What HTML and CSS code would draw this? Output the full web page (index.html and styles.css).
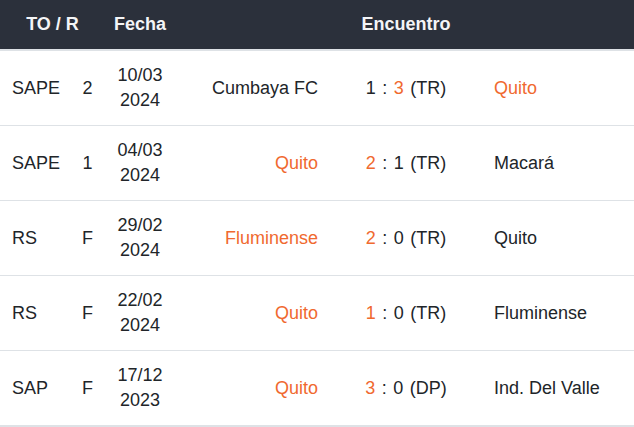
FILE: index.html
```html
<!DOCTYPE html>
<html lang="es">
<head>
<meta charset="utf-8">
<title>Encuentros</title>
<link rel="stylesheet" href="styles.css">
</head>
<body>
<div class="table">
  <div class="head">
    <div class="h h-tor">TO / R</div>
    <div class="h h-date">Fecha</div>
    <div class="h h-match">Encuentro</div>
  </div>

  <div class="row">
    <div class="c to">SAPE</div>
    <div class="c r">2</div>
    <div class="c date">10/03<br>2024</div>
    <div class="c home">Cumbaya FC</div>
    <div class="c score">1 : <span class="win">3</span> (TR)</div>
    <div class="c away win">Quito</div>
  </div>

  <div class="row">
    <div class="c to">SAPE</div>
    <div class="c r">1</div>
    <div class="c date">04/03<br>2024</div>
    <div class="c home win">Quito</div>
    <div class="c score"><span class="win">2</span> : 1 (TR)</div>
    <div class="c away">Macará</div>
  </div>

  <div class="row">
    <div class="c to">RS</div>
    <div class="c r">F</div>
    <div class="c date">29/02<br>2024</div>
    <div class="c home win">Fluminense</div>
    <div class="c score"><span class="win">2</span> : 0 (TR)</div>
    <div class="c away">Quito</div>
  </div>

  <div class="row">
    <div class="c to">RS</div>
    <div class="c r">F</div>
    <div class="c date">22/02<br>2024</div>
    <div class="c home win">Quito</div>
    <div class="c score"><span class="win">1</span> : 0 (TR)</div>
    <div class="c away">Fluminense</div>
  </div>

  <div class="row last">
    <div class="c to">SAP</div>
    <div class="c r">F</div>
    <div class="c date">17/12<br>2023</div>
    <div class="c home win">Quito</div>
    <div class="c score"><span class="win">3</span> : 0 (DP)</div>
    <div class="c away">Ind. Del Valle</div>
  </div>
</div>
</body>
</html>
```

FILE: styles.css
```css
html, body {
  margin: 0;
  padding: 0;
  background: #ffffff;
}

body {
  font-family: "Liberation Sans", Arial, sans-serif;
  font-size: 18px;
  color: #212529;
}

.table {
  width: 634px;
}

.head,
.row {
  display: grid;
  grid-template-columns: 70px 35px 70px 155px 152px 1fr;
  align-items: center;
}

.head {
  height: 49px;
  background: #2b303b;
  color: #f4f5f7;
  font-weight: bold;
  border-bottom: 2px solid #dee2e6;
}

.h-tor {
  grid-column: 1 / 3;
  text-align: center;
}

.h-date {
  grid-column: 3 / 4;
  text-align: center;
}

.h-match {
  grid-column: 4 / 7;
  text-align: center;
  padding-left: 3px;
}

.row {
  height: 74px;
  border-bottom: 1px solid #dee2e6;
}

.row.last {
  border-bottom-width: 2px;
}

.c {
  line-height: 25px;
  white-space: nowrap;
}

.to {
  padding-left: 12px;
}

.r {
  text-align: center;
}

.date {
  text-align: center;
}

.home {
  text-align: right;
  padding-right: 12px;
}

.score {
  text-align: center;
  word-spacing: 1.5px;
}

.away {
  padding-left: 12px;
}

.win {
  color: #f0692f;
}
```
